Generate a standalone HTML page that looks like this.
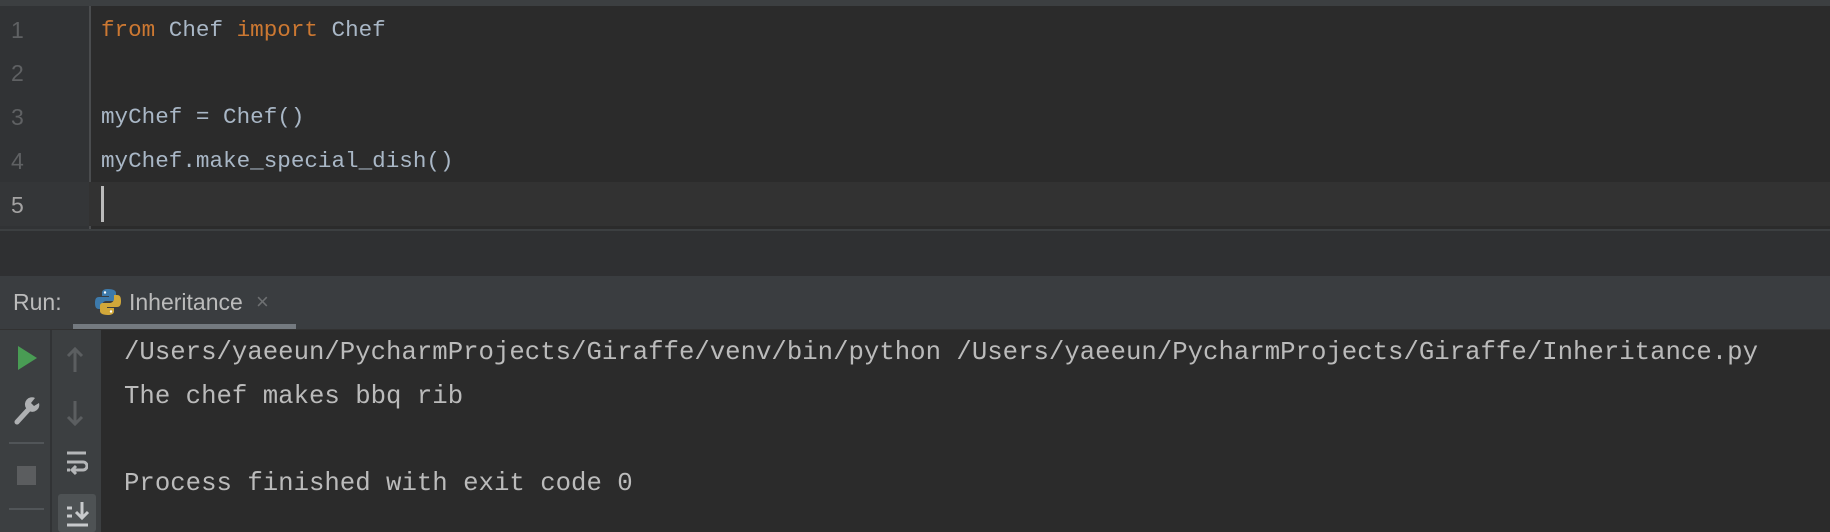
<!DOCTYPE html>
<html><head><style>
body{margin:0;width:1830px;height:532px;background:#2b2b2b;position:relative;overflow:hidden;font-family:"Liberation Mono",monospace}
div{position:absolute}
.ln{left:0;width:60px;text-align:left;padding-left:11px;color:#5f6163;font-size:23px;height:44px;line-height:44px;font-family:"Liberation Sans",sans-serif}
.code{left:101px;font-size:22.6px;color:#a9b7c6;height:44px;line-height:44px;white-space:pre}
.k{color:#cc7832}
.out{left:124px;font-size:25.7px;color:#bbbbbb;white-space:pre;height:44px;line-height:44px}
</style></head><body>
<div style="left:0;top:0;width:1830px;height:6px;background:#3c3f41"></div>
<div style="left:0;top:6px;width:90px;height:224px;background:#313335"></div>
<div style="left:89px;top:6px;width:2px;height:224px;background:#4a4c4e"></div>
<div style="left:0;top:182px;width:1830px;height:44px;background:#323232"></div>
<div style="left:0;top:182px;width:89px;height:44px;background:#343638"></div>
<div class="ln" style="top:8px">1</div>
<div class="ln" style="top:51px">2</div>
<div class="ln" style="top:95px">3</div>
<div class="ln" style="top:139px">4</div>
<div class="ln" style="top:183px;color:#a4a3a3">5</div>
<div class="code" style="top:8px"><span class="k">from</span> Chef <span class="k">import</span> Chef</div>
<div class="code" style="top:95px">myChef = Chef()</div>
<div class="code" style="top:139px">myChef.make_special_dish()</div>
<div style="left:101px;top:186px;width:3px;height:36px;background:#bbbbbb"></div>
<div style="left:0;top:229px;width:1830px;height:2px;background:#3c3f41"></div>
<div style="left:0;top:231px;width:1830px;height:45px;background:#2f3032"></div>
<div style="left:0;top:276px;width:1830px;height:53px;background:#3a3d40"></div>
<div style="left:13px;top:282px;font-family:'Liberation Sans',sans-serif;font-size:23px;color:#bbbbbb;line-height:40px">Run:</div>
<svg style="position:absolute;left:95px;top:288px" width="26" height="28" viewBox="0 0 26 28">
<path d="M13 1c-6 0-6 3-6 4v3h7v1H4c-3 0-4 2-4 6s1 6 4 6h3v-4c0-2 2-4 4-4h7c2 0 3-1 3-3V5c0-2-2-4-8-4z" fill="#3d7aab"/>
<path d="M13 27c6 0 6-3 6-4v-3h-7v-1h10c3 0 4-2 4-6s-1-6-4-6h-3v4c0 2-2 4-4 4H8c-2 0-3 1-3 3v5c0 2 2 4 8 4z" fill="#d1a83a"/>
<circle cx="10" cy="4.5" r="1.2" fill="#fff"/><circle cx="16" cy="23.5" r="1.2" fill="#fff"/></svg>
<div style="left:129px;top:282px;font-family:'Liberation Sans',sans-serif;font-size:23px;color:#bbbbbb;line-height:40px">Inheritance</div>
<div style="left:256px;top:282px;font-family:'Liberation Sans',sans-serif;font-size:22px;color:#6e7072;line-height:40px">×</div>
<div style="left:73px;top:324px;width:223px;height:5px;background:#747a80"></div>
<div style="left:0;top:329px;width:1830px;height:1px;background:#323232"></div>
<div style="left:0;top:330px;width:50px;height:202px;background:#3c3f41"></div>
<div style="left:50px;top:330px;width:2px;height:202px;background:#313335"></div>
<div style="left:52px;top:330px;width:49px;height:202px;background:#3c3f41"></div>
<svg style="position:absolute;left:18px;top:346px" width="20" height="24"><path d="M0 0L19 12L0 24z" fill="#499c54"/></svg>
<svg style="position:absolute;left:14px;top:396px" width="26" height="30" viewBox="0 0 26 30"><path d="M3 26L14 14" stroke="#aeb0b2" stroke-width="5" fill="none" stroke-linecap="round"/><path d="M12 12a7 7 0 0 1 9-10l-4 5 3 3 5-3a7 7 0 0 1-10 8z" fill="#aeb0b2"/></svg>
<div style="left:9px;top:442px;width:35px;height:2px;background:#515558"></div>
<div style="left:17px;top:466px;width:19px;height:19px;background:#5b5d5f"></div>
<div style="left:9px;top:508px;width:35px;height:2px;background:#515558"></div>
<svg style="position:absolute;left:66px;top:347px" width="18" height="26"><path d="M9 25V2M2 9L9 2L16 9" stroke="#5b5e60" stroke-width="3" fill="none"/></svg>
<svg style="position:absolute;left:66px;top:400px" width="18" height="26"><path d="M9 1V24M2 17L9 24L16 17" stroke="#5b5e60" stroke-width="3" fill="none"/></svg>
<svg style="position:absolute;left:64px;top:450px" width="24" height="30"><path d="M3 3H22M3 12H19a4 4 0 0 1 0 8H9M12 16L8 20L12 24M3 20H6" stroke="#b4b6b8" stroke-width="3" fill="none"/></svg>
<div style="left:58px;top:494px;width:38px;height:38px;background:#4e5254;border-radius:3px"></div>
<svg style="position:absolute;left:64px;top:500px" width="26" height="28"><path d="M3 8H8M3 16H8M3 25H24M18 2V18M12 12L18 18L24 12" stroke="#c8cacc" stroke-width="3" fill="none"/></svg>
<div class="out" style="top:331px">/Users/yaeeun/PycharmProjects/Giraffe/venv/bin/python /Users/yaeeun/PycharmProjects/Giraffe/Inheritance.py</div>
<div class="out" style="top:375px">The chef makes bbq rib</div>
<div class="out" style="top:462px">Process finished with exit code 0</div>
</body></html>
